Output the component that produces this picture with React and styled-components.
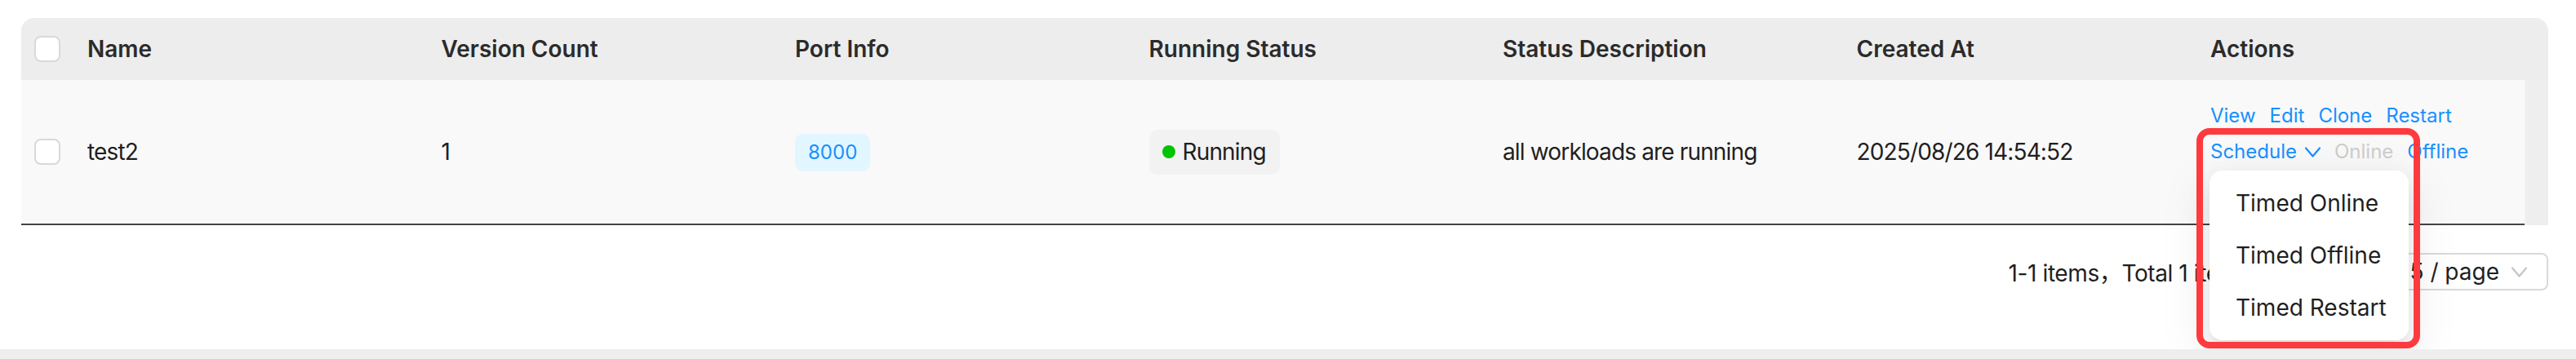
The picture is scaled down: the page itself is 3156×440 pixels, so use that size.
import React from "react";
import styled, { createGlobalStyle } from "styled-components";

const GlobalStyle = createGlobalStyle`
  html, body {
    margin: 0;
    padding: 0;
    background: #eeeeee;
  }
  body {
    font-family: Inter, "Noto Sans CJK SC", sans-serif;
    -webkit-font-smoothing: antialiased;
  }
  * { box-sizing: border-box; }
`;

const COLS = "65px repeat(6, 433.5px) 401px";

const Page = styled.div`
  height: 428px;
  background: #ffffff;
  padding: 22px 34px 0 26px;
`;

const TableCard = styled.div`
  width: 3096px;
`;

const HeaderRow = styled.div`
  display: grid;
  grid-template-columns: ${COLS} 29px;
  align-items: center;
  height: 76px;
  background: #ededed;
  border-radius: 16px 16px 0 0;
`;

const HeadCell = styled.div`
  padding: 0 16px;
  font-size: 28px;
  font-weight: 600;
  color: #2b2b2b;
  white-space: nowrap;
`;

const BodyWrap = styled.div`
  display: flex;
`;

const BodyRow = styled.div`
  flex: 1;
  display: grid;
  grid-template-columns: ${COLS};
  align-items: center;
  height: 178px;
  background: #f9f9f9;
  border-bottom: 2px solid #444444;
`;

const ScrollTrack = styled.div`
  width: 29px;
  height: 178px;
  background: #eeeeee;
  border-left: 1px solid #f4f4f4;
`;

const Cell = styled.div`
  padding: 0 16px;
  font-size: 28px;
  line-height: 44px;
  letter-spacing: -0.85px;
  color: #1f1f1f;
  white-space: nowrap;
`;

const Checkbox = styled.span`
  display: block;
  width: 32px;
  height: 32px;
  border: 2px solid #d9d9d9;
  border-radius: 8px;
  background: #ffffff;
`;

const PortTag = styled.span`
  display: inline-flex;
  align-items: center;
  height: 46px;
  padding: 0 16px;
  border-radius: 10px;
  background: #e2f6ff;
  color: #1890ff;
  font-size: 24px;
  letter-spacing: 0;
`;

const StatusTag = styled.span`
  display: inline-flex;
  align-items: center;
  gap: 9px;
  height: 55px;
  padding: 0 17px 0 16px;
  border-radius: 10px;
  background: #f2f2f2;
  color: #1f1f1f;
  font-size: 28px;
`;

const Dot = styled.span`
  width: 16px;
  height: 16px;
  border-radius: 50%;
  background: ${(p) => p.$color};
`;

const Actions = styled.div`
  display: flex;
  flex-direction: column;
  letter-spacing: 0;
`;

const ActionLine = styled.div`
  display: flex;
  align-items: center;
  gap: 17px;
  height: 44px;
`;

const LinkBtn = styled.span`
  font-size: 24px;
  line-height: 44px;
  color: ${(p) => (p.$disabled ? "#cdcdcd" : "#1890ff")};
`;

const Trigger = styled.span`
  position: relative;
  display: inline-flex;
  align-items: center;
  gap: 10px;
  color: #1890ff;
`;

const Menu = styled.div`
  position: absolute;
  top: calc(100% + 1px);
  left: -1px;
  z-index: 5;
  width: 244px;
  padding: 8px;
  background: #ffffff;
  border-radius: 16px;
  box-shadow: 0 12px 32px 0 rgba(0, 0, 0, 0.08),
    0 6px 12px -8px rgba(0, 0, 0, 0.12), 0 18px 56px 16px rgba(0, 0, 0, 0.05);
`;

const MenuItem = styled.div`
  padding: 10px 24px;
  font-size: 28px;
  line-height: 44px;
  color: #1f1f1f;
  white-space: nowrap;
`;

const Highlight = styled.div`
  position: absolute;
  left: -17px;
  top: -7px;
  z-index: 6;
  width: 274px;
  height: 270px;
  border: 8px solid #ff3a3f;
  border-radius: 16px;
  pointer-events: none;
`;

const Pagination = styled.div`
  display: flex;
  align-items: center;
  justify-content: flex-end;
  margin-top: 33px;
  font-size: 28px;
  color: #1f1f1f;
`;

const Total = styled.span`
  margin-right: 8px;
  white-space: nowrap;
  letter-spacing: -0.4px;
`;

const PageItem = styled.span`
  display: inline-flex;
  align-items: center;
  justify-content: center;
  width: 48px;
  height: 48px;
  border-radius: 8px;
  border: 2px solid ${(p) => (p.$active ? "#1890ff" : "transparent")};
  color: ${(p) => (p.$active ? "#1890ff" : "#bfbfbf")};
`;

const SizeSelect = styled.span`
  display: inline-flex;
  align-items: center;
  gap: 15px;
  height: 46px;
  margin-left: 16px;
  padding: 0 24px 0 14px;
  border: 2px solid #d9d9d9;
  border-radius: 8px;
  background: #ffffff;
  white-space: nowrap;
`;

const Chevron = ({ color }) => (
  <svg width="19" height="13" viewBox="0 0 19 13" fill="none">
    <path
      d="M1 1.5 L9.5 11.5 L18 1.5"
      stroke={color}
      strokeWidth="2.2"
      strokeLinejoin="round"
      strokeLinecap="round"
    />
  </svg>
);

const headers = [
  "Name",
  "Version Count",
  "Port Info",
  "Running Status",
  "Status Description",
  "Created At",
  "Actions",
];

export default function App() {
  return (
    <>
      <GlobalStyle />
      <Page>
        <TableCard>
          <HeaderRow>
            <HeadCell>
              <Checkbox />
            </HeadCell>
            {headers.map((h) => (
              <HeadCell key={h}>{h}</HeadCell>
            ))}
            <span />
          </HeaderRow>
          <BodyWrap>
            <BodyRow>
              <Cell>
                <Checkbox />
              </Cell>
              <Cell>test2</Cell>
              <Cell>1</Cell>
              <Cell>
                <PortTag>8000</PortTag>
              </Cell>
              <Cell>
                <StatusTag>
                  <Dot $color="#00c400" />
                  Running
                </StatusTag>
              </Cell>
              <Cell>all workloads are running</Cell>
              <Cell>2025/08/26 14:54:52</Cell>
              <Cell>
                <Actions>
                  <ActionLine>
                    <LinkBtn>View</LinkBtn>
                    <LinkBtn>Edit</LinkBtn>
                    <LinkBtn>Clone</LinkBtn>
                    <LinkBtn>Restart</LinkBtn>
                  </ActionLine>
                  <ActionLine>
                    <Trigger>
                      <LinkBtn>Schedule</LinkBtn>
                      <Chevron color="#1890ff" />
                      <Menu>
                        <MenuItem>Timed Online</MenuItem>
                        <MenuItem>Timed Offline</MenuItem>
                        <MenuItem>Timed Restart</MenuItem>
                      </Menu>
                      <Highlight />
                    </Trigger>
                    <LinkBtn $disabled>Online</LinkBtn>
                    <LinkBtn>Offline</LinkBtn>
                  </ActionLine>
                  <ActionLine>
                    <LinkBtn>Delete</LinkBtn>
                  </ActionLine>
                </Actions>
              </Cell>
            </BodyRow>
            <ScrollTrack />
          </BodyWrap>
          <Pagination>
            <Total>1-1 items，Total 1 items</Total>
            <PageItem>‹</PageItem>
            <PageItem $active>1</PageItem>
            <PageItem>›</PageItem>
            <SizeSelect>
              15 / page
              <Chevron color="#c4c4c4" />
            </SizeSelect>
          </Pagination>
        </TableCard>
      </Page>
    </>
  );
}
